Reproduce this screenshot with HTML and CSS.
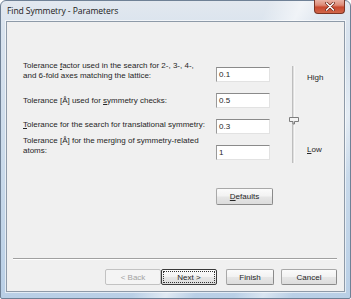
FILE: index.html
```html
<!DOCTYPE html>
<html>
<head>
<meta charset="utf-8">
<link rel="stylesheet" href="styles.css">
</head>
<body>
<div class="window">
  <div class="titlebar">
    <span class="title">Find Symmetry - Parameters</span>
    <div class="close">
      <svg width="12" height="9" viewBox="0 0 12 9"><path d="M2.5 1 L9.5 8 M9.5 1 L2.5 8" stroke="#6a2214" stroke-width="2.8" stroke-linecap="round"/><path d="M2.5 1 L9.5 8 M9.5 1 L2.5 8" stroke="#fff" stroke-width="1.5" stroke-linecap="round"/></svg>
    </div>
  </div>
  <div class="client">
    <div class="form">
      <div class="fields">
        <div class="row">
          <label class="lbl two first">Tolerance <u>f</u>actor used in the search for 2-, 3-, 4-,<br>and 6-fold axes matching the lattice:</label>
          <div class="edit">0.1</div>
        </div>
        <div class="row">
          <label class="lbl mid">Tolerance [Å] used for <u>s</u>ymmetry checks:</label>
          <div class="edit">0.5</div>
        </div>
        <div class="row">
          <label class="lbl third"><u>T</u>olerance for the search for translational symmetry:</label>
          <div class="edit">0.3</div>
        </div>
        <div class="row">
          <label class="lbl two last">Tolerance [Å] for the merging of symmetry-related<br>atoms:</label>
          <div class="edit">1</div>
        </div>
      </div>
      <div class="slider">
        <svg class="track" width="12" height="97" viewBox="0 0 12 97">
          <rect x="3.5" y="0" width="1" height="97" fill="#8c8c8c"/>
          <rect x="4.5" y="0" width="1" height="97" fill="#ffffff"/>
          <path d="M0.5 51.5 H9.5 V55.5 H5.5 V58 H4 V55.5 H0.5 Z" fill="#f4f4f4" stroke="#7d7d7d" stroke-width="1"/>
        </svg>
        <div class="scale">
          <span>High</span>
          <span><u>L</u>ow</span>
        </div>
      </div>
    </div>
    <div class="defaults-row">
      <button class="btn defaults"><u>D</u>efaults</button>
    </div>
    <div class="sep"></div>
    <div class="buttons">
      <button class="btn back" disabled>&lt; Back</button>
      <button class="btn next"><span class="focus">Next &gt;</span></button>
      <button class="btn finish">Finish</button>
      <button class="btn cancel">Cancel</button>
    </div>
  </div>
</div>
</body>
</html>
```

FILE: styles.css
```css
html, body {
  margin: 0;
  padding: 0;
  background: #ffffff;
}

.window {
  width: 351px;
  height: 299px;
  box-sizing: border-box;
  padding: 0 5px 6px 5px;
  border: 1px solid #6f8196;
  border-radius: 6px 6px 2px 2px;
  background:
    linear-gradient(115deg, rgba(255,255,255,0) 55%, rgba(255,255,255,0.55) 62%, rgba(255,255,255,0) 68%, rgba(255,255,255,0) 76%, rgba(255,255,255,0.45) 82%, rgba(255,255,255,0) 88%),
    linear-gradient(180deg, #e2e8ef 0%, #d9e3ee 10%, #c8d9ea 60%, #b9cfe6 100%);
  display: flex;
  flex-direction: column;
  font-family: "Liberation Sans", Arial, sans-serif;
}

.titlebar {
  height: 20px;
  display: flex;
  align-items: flex-start;
}

.title {
  font-family: "Open Sans", "Liberation Sans", sans-serif;
  font-size: 8.6px;
  color: #1a1a1a;
  margin-top: 4px;
  margin-left: 1px;
  letter-spacing: -0.1px;
}

.close {
  margin-left: auto;
  margin-top: -1px;
  width: 31px;
  height: 14px;
  box-sizing: border-box;
  border: 1px solid #7b3424;
  border-top: none;
  border-radius: 0 0 4px 4px;
  background: linear-gradient(180deg, #eab3a6 0%, #dd8a76 40%, #c9492f 55%, #d0664a 100%);
  display: flex;
  align-items: center;
  justify-content: center;
}

.client {
  flex: 1;
  background: #f0f0f0;
  border: 1px solid #8e9aa8;
  box-shadow: 0 0 0 1px rgba(255,255,255,0.6);
  display: flex;
  flex-direction: column;
  font-size: 8px;
  color: #262626;
}

.form {
  display: flex;
  padding-top: 45px;
  padding-left: 16px;
}

.fields {
  display: flex;
  flex-direction: column;
}

.row {
  display: grid;
  grid-template-columns: 193px 54px;
  height: 26px;
  align-items: start;
}

.lbl {
  line-height: 10px;
  white-space: nowrap;
}

.lbl.first { margin-top: -6px; }
.lbl.mid { margin-top: 3px; }
.lbl.third { margin-top: 1px; }
.lbl.last { margin-top: -9px; }

.edit {
  height: 15px;
  box-sizing: border-box;
  background: #fff;
  border: 1px solid;
  border-color: #8a8a8a #e2e2e2 #e2e2e2 #9a9a9a;
  padding-left: 2px;
  line-height: 13px;
  font-size: 8px;
}

.slider {
  display: flex;
  margin-left: 19px;
  margin-top: -1px;
}

.track {
  display: block;
}

.scale {
  display: flex;
  flex-direction: column;
  justify-content: space-between;
  margin-left: 6px;
  padding-top: 7px;
  height: 82px;
  line-height: 10px;
}

.defaults-row {
  padding-left: 209px;
  margin-top: 17px;
}

.btn {
  font-family: "Liberation Sans", Arial, sans-serif;
  font-size: 8px;
  color: #262626;
  height: 16px;
  box-sizing: border-box;
  padding: 0;
  border: 1px solid #a8a8a8;
  border-right-color: #8a8a8a;
  border-bottom-color: #8a8a8a;
  border-radius: 2px;
  background: linear-gradient(180deg, #fbfbfb 0%, #f2f2f2 48%, #e6e6e6 52%, #dcdcdc 100%);
  display: flex;
  align-items: center;
  justify-content: center;
}

.defaults {
  width: 57px;
  height: 17px;
}

.sep {
  margin: 53px 7px 0 6px;
  height: 1px;
  background: #a0a0a0;
  border-bottom: 1px solid #fff;
}

.buttons {
  display: flex;
  margin-top: 9px;
  padding-left: 98px;
}

.back {
  width: 56px;
  color: #a3a3a3;
  border-color: #c2c2c2;
  background: #f4f4f4;
}

.next {
  width: 56px;
  border-color: #3a3a3a;
}

.next .focus {
  display: flex;
  align-items: center;
  justify-content: center;
  width: 50px;
  height: 10px;
  border: 1px dotted #333;
}

.finish {
  width: 48px;
  margin-left: 9px;
}

.cancel {
  width: 56px;
  margin-left: 7px;
}
```
